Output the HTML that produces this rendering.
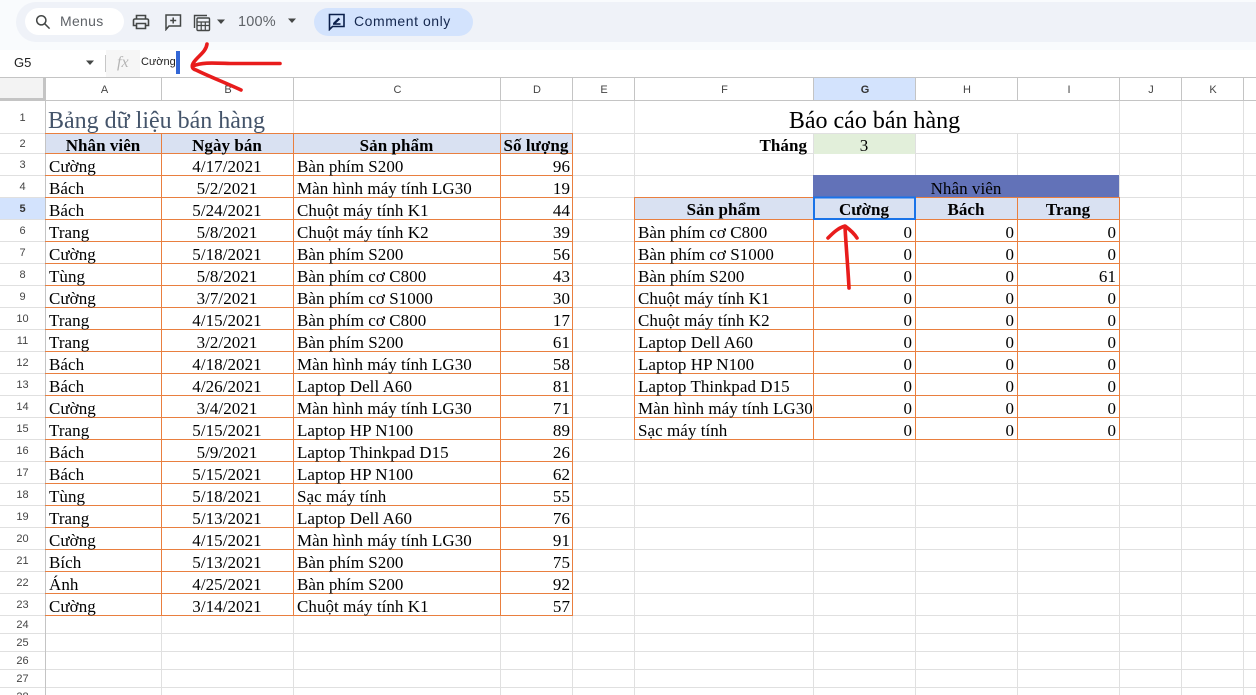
<!DOCTYPE html>
<html><head><meta charset="utf-8"><style>
html,body{margin:0;padding:0;background:#fff}
#p{position:relative;width:1256px;height:695px;overflow:hidden;background:#fff;font-family:"Liberation Serif",serif;font-size:17px;letter-spacing:.05px;color:#000}
#p div,#p svg{position:absolute}
.r{left:0;width:1256px;height:22px}
.r i{position:absolute;top:2.5px;line-height:22px;height:22px;font-style:normal;white-space:nowrap}
.r i.bb{top:1.5px;font-weight:bold}
.a{left:49px}.b{left:161px;width:132px;text-align:center}.c{left:297px}.d{left:500px;width:70px;text-align:right}
.f{left:638px}.g{left:813px;width:99px;text-align:right}.h{left:915px;width:99px;text-align:right}.j{left:1017px;width:99px;text-align:right}
.cg{left:813px;width:102px;text-align:center}.ch{left:915px;width:102px;text-align:center}.ci{left:1017px;width:102px;text-align:center}
.ca{left:45px;width:116px;text-align:center}.cc{left:293px;width:207px;text-align:center}.cd{left:500px;width:72px;text-align:center}.cf{left:634px;width:179px;text-align:center}
.hd i{font-weight:bold}
.ch1{position:absolute;top:79px;height:23px;text-align:center;font:11px/23px "Liberation Sans",sans-serif;color:#444;letter-spacing:0;margin-left:1px}
.rn{position:absolute;left:0;width:45px;text-align:center;font:11px "Liberation Sans",sans-serif;color:#444;letter-spacing:0;margin-top:1px}
.ui{font-family:"Liberation Sans",sans-serif;letter-spacing:0}
</style></head><body><div id="p">
<div style="left:0;top:0;width:1256px;height:50px;background:#f9fbfd"></div>
<div style="left:16px;top:2px;width:1240px;height:40px;background:#eff2f8;border-radius:20px 0 0 20px"></div>
<div style="left:25px;top:8px;width:99px;height:27px;background:#fff;border-radius:14px"></div>
<svg style="left:35px;top:14px" width="16" height="16" viewBox="0 0 16 16" fill="none" stroke="#444746" stroke-width="1.5"><circle cx="6.3" cy="6.3" r="4.6"/><path d="M9.8 9.8L14.6 14.6"/></svg>
<div class="ui" style="left:60px;top:13px;font-size:14px;line-height:16px;color:#5f6368;letter-spacing:.3px">Menus</div>
<svg style="left:132px;top:14px" width="18" height="16" viewBox="0 0 18 16" fill="none" stroke="#444746" stroke-width="1.6"><path d="M4.5 11.5H1.5V6.5Q1.5 5 3 5H15Q16.5 5 16.5 6.5V11.5H13.5"/><path d="M4.5 5V1.5H13.5V5"/><path d="M4.5 9.5H13.5V14.5H4.5Z"/></svg>
<svg style="left:164px;top:13px" width="18" height="18" viewBox="0 0 18 18" fill="none" stroke="#444746" stroke-width="1.5"><path d="M2 2H16.5V13H5L2 16.5Z"/><path d="M9.2 4.5V10.5M6.2 7.5H12.2"/></svg>
<svg style="left:193px;top:14px" width="18" height="18" viewBox="0 0 18 18" fill="none" stroke="#444746" stroke-width="1.4"><path d="M1.5 14V1.5H14"/><rect x="4" y="4" width="12.5" height="12.5" rx="1"/><path d="M4 8H16.5M4 11.5H16.5M8.2 8V16.5M12.3 8V16.5" stroke-width="1.2"/></svg>
<svg style="left:216px;top:19px" width="10" height="6" viewBox="0 0 10 6"><path d="M1 0.5H9L5 5Z" fill="#444746"/></svg>
<div class="ui" style="left:238px;top:14px;font-size:14.5px;line-height:16px;color:#5f6368;letter-spacing:.2px">100%</div>
<svg style="left:287px;top:18px" width="10" height="6" viewBox="0 0 10 6"><path d="M1 0.5H9L5 5Z" fill="#444746"/></svg>
<div style="left:314px;top:8px;width:159px;height:28px;background:#d3e3fd;border-radius:14px"></div>
<svg style="left:328px;top:13px" width="18" height="18" viewBox="0 0 18 18" fill="none" stroke="#0b1f4b" stroke-width="1.6"><path d="M1.5 1.5H16V13.5H4.5L1.5 16.5Z"/><path d="M5 11H12.5"/><path d="M5.5 10L10.5 5L11.8 6.3L7 10.8Z" fill="#0b1f4b" stroke-width=".6"/></svg>
<div class="ui" style="left:354px;top:13px;font-size:14px;line-height:16px;color:#14274e;letter-spacing:.55px">Comment only</div>
<div style="left:0;top:50px;width:1256px;height:27px;background:#fff"></div>
<div class="ui" style="left:14px;top:55px;font-size:13px;line-height:15px;color:#222">G5</div>
<svg style="left:85px;top:60px" width="10" height="6" viewBox="0 0 10 6"><path d="M1 0.5H9L5 5Z" fill="#444746"/></svg>
<div style="left:105px;top:55px;width:1px;height:17px;background:#c7c7c7"></div>
<div style="left:106px;top:50px;width:34px;height:27px;background:#f6f6f6"></div>
<div style="left:117px;top:54px;font:italic 16px/18px 'Liberation Serif',serif;color:#b4b4b4">fx</div>
<div class="ui" style="left:141px;top:55px;font-size:11px;line-height:14px;color:#222">Cường</div>
<div style="left:176px;top:51px;width:4px;height:23px;background:#3367d6"></div>

<svg style="left:0;top:0" width="1256" height="695" shape-rendering="crispEdges">
<rect x="0" y="78" width="43" height="20" fill="#f3f3f3"/>
<rect x="43" y="78" width="3" height="23" fill="#c4c4c4"/><rect x="0" y="98" width="46" height="3" fill="#c4c4c4"/>
<rect x="813" y="78" width="102" height="23" fill="#d3e3fd"/>
<rect x="0" y="197" width="45" height="22" fill="#d3e3fd"/>
<g stroke="#e0e0e0" stroke-width="1">
<path d="M0 133.5H1256M0 153.5H1256M0 175.5H1256M0 197.5H1256M0 219.5H1256M0 241.5H1256M0 263.5H1256M0 285.5H1256M0 307.5H1256M0 329.5H1256M0 351.5H1256M0 373.5H1256M0 395.5H1256M0 417.5H1256M0 439.5H1256M0 461.5H1256M0 483.5H1256M0 505.5H1256M0 527.5H1256M0 549.5H1256M0 571.5H1256M0 593.5H1256M0 615.5H1256M0 633.5H1256M0 651.5H1256M0 669.5H1256M0 687.5H1256"/>
<path d="M161.5 133V695M293.5 101V695M500.5 101V695M572.5 101V695M634.5 101V695M813.5 133V695M915.5 133V695M1017.5 133V695M1119.5 101V695M1181.5 101V695M1243.5 101V695"/>
</g>
<path d="M45.5 78V695" stroke="#c4c4c4"/>
<path d="M0 77.5H1256" stroke="#c4c4c4"/>
<path d="M46 100.5H1256" stroke="#c4c4c4"/>
<path d="M161.5 78V100M293.5 78V100M500.5 78V100M572.5 78V100M634.5 78V100M813.5 78V100M915.5 78V100M1017.5 78V100M1119.5 78V100M1181.5 78V100M1243.5 78V100" stroke="#c4c4c4"/>
<rect x="46" y="133" width="526" height="20" fill="#d9e1f2"/>
<rect x="814" y="134" width="101" height="20" fill="#e2efda"/>
<rect x="813" y="175" width="306" height="22" fill="#6272b8"/>
<rect x="635" y="197" width="484" height="22" fill="#d9e1f2"/>
<g stroke="#e97f3f" stroke-width="1">
<path d="M45 133.5H573M45 153.5H573M45 175.5H573M45 197.5H573M45 219.5H573M45 241.5H573M45 263.5H573M45 285.5H573M45 307.5H573M45 329.5H573M45 351.5H573M45 373.5H573M45 395.5H573M45 417.5H573M45 439.5H573M45 461.5H573M45 483.5H573M45 505.5H573M45 527.5H573M45 549.5H573M45 571.5H573M45 593.5H573M45 615.5H573"/>
<path d="M161.5 133V616M293.5 133V616M500.5 133V616M572.5 133V616"/>
<path d="M634 197.5H1120M634 219.5H1120M634 241.5H1120M634 263.5H1120M634 285.5H1120M634 307.5H1120M634 329.5H1120M634 351.5H1120M634 373.5H1120M634 395.5H1120M634 417.5H1120M634 439.5H1120"/>
<path d="M634.5 197V440M813.5 197V440M915.5 197V440M1017.5 197V440M1119.5 197V440"/>
</g>
<rect x="814" y="197.5" width="101" height="21.5" fill="none" stroke="#1a73e8" stroke-width="2"/>
</svg>

<div class="ch1" style="left:46px;width:115px">A</div><div class="ch1" style="left:161px;width:132px">B</div><div class="ch1" style="left:293px;width:207px">C</div><div class="ch1" style="left:500px;width:72px">D</div><div class="ch1" style="left:572px;width:62px">E</div><div class="ch1" style="left:634px;width:179px">F</div><div class="ch1" style="left:813px;width:102px;font-weight:bold;color:#333">G</div><div class="ch1" style="left:915px;width:102px">H</div><div class="ch1" style="left:1017px;width:102px">I</div><div class="ch1" style="left:1119px;width:62px">J</div><div class="ch1" style="left:1181px;width:62px">K</div>

<div class="rn" style="top:111px">1</div><div class="rn" style="top:137px">2</div><div class="rn" style="top:158px">3</div><div class="rn" style="top:180px">4</div><div class="rn" style="top:202px;font-weight:bold;color:#333">5</div><div class="rn" style="top:224px">6</div><div class="rn" style="top:246px">7</div><div class="rn" style="top:268px">8</div><div class="rn" style="top:290px">9</div><div class="rn" style="top:312px">10</div><div class="rn" style="top:334px">11</div><div class="rn" style="top:356px">12</div><div class="rn" style="top:378px">13</div><div class="rn" style="top:400px">14</div><div class="rn" style="top:422px">15</div><div class="rn" style="top:444px">16</div><div class="rn" style="top:466px">17</div><div class="rn" style="top:488px">18</div><div class="rn" style="top:510px">19</div><div class="rn" style="top:532px">20</div><div class="rn" style="top:554px">21</div><div class="rn" style="top:576px">22</div><div class="rn" style="top:598px">23</div><div class="rn" style="top:618px">24</div><div class="rn" style="top:636px">25</div><div class="rn" style="top:654px">26</div><div class="rn" style="top:672px">27</div><div class="rn" style="top:690px">28</div>

<div style="left:48px;top:107px;font-size:24px;letter-spacing:0;line-height:28px;color:#44546a;white-space:nowrap">Bảng dữ liệu bán hàng</div>
<div style="left:634px;top:107px;width:481px;font-size:24px;letter-spacing:0;line-height:28px;text-align:center;white-space:nowrap">Báo cáo bán hàng</div>

<div class="r hd" style="top:132px"><i class="ca">Nhân viên</i><i class="b">Ngày bán</i><i class="cc">Sản phẩm</i><i class="cd">Số lượng</i><i style="right:449px">Tháng</i></div>
<div class="r" style="top:132px"><i class="cg">3</i></div>
<div class="r" style="top:153px"><i class="a">Cường</i><i class="b">4/17/2021</i><i class="c">Bàn phím S200</i><i class="d">96</i></div>
<div class="r" style="top:175px"><i class="a">Bách</i><i class="b">5/2/2021</i><i class="c">Màn hình máy tính LG30</i><i class="d">19</i><i style="left:813px;width:306px;text-align:center">Nhân viên</i></div>
<div class="r" style="top:197px"><i class="a">Bách</i><i class="b">5/24/2021</i><i class="c">Chuột máy tính K1</i><i class="d">44</i><i class="cf bb">Sản phẩm</i><i class="cg bb">Cường</i><i class="ch bb">Bách</i><i class="ci bb">Trang</i></div>
<div class="r" style="top:219px"><i class="a">Trang</i><i class="b">5/8/2021</i><i class="c">Chuột máy tính K2</i><i class="d">39</i><i class="f">Bàn phím cơ C800</i><i class="g">0</i><i class="h">0</i><i class="j">0</i></div>
<div class="r" style="top:241px"><i class="a">Cường</i><i class="b">5/18/2021</i><i class="c">Bàn phím S200</i><i class="d">56</i><i class="f">Bàn phím cơ S1000</i><i class="g">0</i><i class="h">0</i><i class="j">0</i></div>
<div class="r" style="top:263px"><i class="a">Tùng</i><i class="b">5/8/2021</i><i class="c">Bàn phím cơ C800</i><i class="d">43</i><i class="f">Bàn phím S200</i><i class="g">0</i><i class="h">0</i><i class="j">61</i></div>
<div class="r" style="top:285px"><i class="a">Cường</i><i class="b">3/7/2021</i><i class="c">Bàn phím cơ S1000</i><i class="d">30</i><i class="f">Chuột máy tính K1</i><i class="g">0</i><i class="h">0</i><i class="j">0</i></div>
<div class="r" style="top:307px"><i class="a">Trang</i><i class="b">4/15/2021</i><i class="c">Bàn phím cơ C800</i><i class="d">17</i><i class="f">Chuột máy tính K2</i><i class="g">0</i><i class="h">0</i><i class="j">0</i></div>
<div class="r" style="top:329px"><i class="a">Trang</i><i class="b">3/2/2021</i><i class="c">Bàn phím S200</i><i class="d">61</i><i class="f">Laptop Dell A60</i><i class="g">0</i><i class="h">0</i><i class="j">0</i></div>
<div class="r" style="top:351px"><i class="a">Bách</i><i class="b">4/18/2021</i><i class="c">Màn hình máy tính LG30</i><i class="d">58</i><i class="f">Laptop HP N100</i><i class="g">0</i><i class="h">0</i><i class="j">0</i></div>
<div class="r" style="top:373px"><i class="a">Bách</i><i class="b">4/26/2021</i><i class="c">Laptop Dell A60</i><i class="d">81</i><i class="f">Laptop Thinkpad D15</i><i class="g">0</i><i class="h">0</i><i class="j">0</i></div>
<div class="r" style="top:395px"><i class="a">Cường</i><i class="b">3/4/2021</i><i class="c">Màn hình máy tính LG30</i><i class="d">71</i><i class="f">Màn hình máy tính LG30</i><i class="g">0</i><i class="h">0</i><i class="j">0</i></div>
<div class="r" style="top:417px"><i class="a">Trang</i><i class="b">5/15/2021</i><i class="c">Laptop HP N100</i><i class="d">89</i><i class="f">Sạc máy tính</i><i class="g">0</i><i class="h">0</i><i class="j">0</i></div>
<div class="r" style="top:439px"><i class="a">Bách</i><i class="b">5/9/2021</i><i class="c">Laptop Thinkpad D15</i><i class="d">26</i></div>
<div class="r" style="top:461px"><i class="a">Bách</i><i class="b">5/15/2021</i><i class="c">Laptop HP N100</i><i class="d">62</i></div>
<div class="r" style="top:483px"><i class="a">Tùng</i><i class="b">5/18/2021</i><i class="c">Sạc máy tính</i><i class="d">55</i></div>
<div class="r" style="top:505px"><i class="a">Trang</i><i class="b">5/13/2021</i><i class="c">Laptop Dell A60</i><i class="d">76</i></div>
<div class="r" style="top:527px"><i class="a">Cường</i><i class="b">4/15/2021</i><i class="c">Màn hình máy tính LG30</i><i class="d">91</i></div>
<div class="r" style="top:549px"><i class="a">Bích</i><i class="b">5/13/2021</i><i class="c">Bàn phím S200</i><i class="d">75</i></div>
<div class="r" style="top:571px"><i class="a">Ánh</i><i class="b">4/25/2021</i><i class="c">Bàn phím S200</i><i class="d">92</i></div>
<div class="r" style="top:593px"><i class="a">Cường</i><i class="b">3/14/2021</i><i class="c">Chuột máy tính K1</i><i class="d">57</i></div>

<svg style="left:0;top:0" width="1256" height="695" fill="none" stroke="#e81c1c" stroke-width="3.6" stroke-linecap="round" stroke-linejoin="round">
<path d="M207 44C206 52 198 56 194 62C191 66 192 69 196 70C208 76 226 83 241 90"/>
<path d="M193 66C202 62 214 63 230 63.5L280 63.5"/>
<path d="M849 288C848 268 846 246 845 227"/>
<path d="M828 238C833 233 838 228 845 226C849 229 854 233 857 238"/>
</svg>
</div></body></html>
